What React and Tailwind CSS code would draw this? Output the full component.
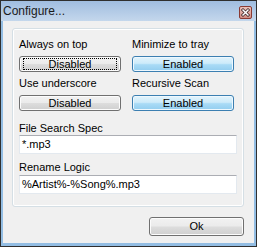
import { useState } from "react";

function GrayButton({ children, focused, className = "" }) {
  return (
    <button
      className={`relative flex items-center justify-center rounded-[3px] border border-[#707070] bg-[linear-gradient(#f2f2f2_0%,#ebebeb_48%,#dddddd_52%,#cfcfcf_100%)] text-[11px] leading-none text-black shadow-[inset_0_0_0_1px_#fcfcfc] ${className}`}
    >
      {focused && (
        <span className="pointer-events-none absolute bottom-[1px] left-[3px] right-[3px] top-[1px] border border-dotted border-black" />
      )}
      <span className="relative">{children}</span>
    </button>
  );
}

function BlueButton({ children, className = "" }) {
  return (
    <button
      className={`flex items-center justify-center rounded-[3px] border border-[#3c7fb1] bg-[linear-gradient(#e3f4fc_0%,#cdebfa_45%,#a9dbf6_55%,#92cdef_100%)] text-[11px] leading-none text-black shadow-[inset_0_0_0_1px_#eef8fe] ${className}`}
    >
      {children}
    </button>
  );
}

function Field({ value }) {
  return (
    <div className="flex h-[19px] w-[218px] items-center border border-[#e3e9ef] border-t-[#abadb3] bg-white pl-[2px] text-[11px] text-black">
      {value}
    </div>
  );
}

export default function App() {
  const [spec] = useState("*.mp3");
  const [logic] = useState("%Artist%-%Song%.mp3");

  return (
    <div
      className="flex h-[247px] w-[257px] flex-col border border-[#2f2f2f] bg-[#f0f0f0]"
      style={{ fontFamily: '"Liberation Sans", Arial, sans-serif' }}
    >
      <div className="flex h-[20px] items-center justify-between bg-[linear-gradient(#a0bde0,#c4d7ec)] pl-[2px] pr-[4px]">
        <span className="text-[12px] leading-none text-[#1a1a1a]">Configure...</span>
        <svg width="13" height="13" viewBox="0 0 13 13" className="mt-[2px]">
          <defs>
            <linearGradient id="cl" x1="0" y1="0" x2="0" y2="1">
              <stop offset="0" stopColor="#ecc3bc" />
              <stop offset="1" stopColor="#d28c82" />
            </linearGradient>
          </defs>
          <rect x="0.5" y="0.5" width="12" height="12" rx="1.5" fill="url(#cl)" stroke="#8a3a33" />
          <path d="M4 4 L9 9 M9 4 L4 9" stroke="#3a2020" strokeWidth="3" strokeLinecap="square" />
          <path d="M4 4 L9 9 M9 4 L4 9" stroke="#ffffff" strokeWidth="1.5" strokeLinecap="square" />
        </svg>
      </div>

      <div className="flex flex-1 flex-col border-x-2 border-b-[3px] border-[#93bde3] bg-[#f0f0f0]">
        <div className="ml-[9px] mt-[7px] w-[232px] rounded-[3px] border border-[#d5dfe5] pb-[12px] pl-[6px] pt-[9px] shadow-[inset_0_0_0_1px_#ffffff] text-[11px] leading-[13px] text-black">
          <div className="grid grid-cols-[102px_102px] gap-x-[11px]">
            <div className="flex flex-col">
              <span>Always on top</span>
              <GrayButton focused className="mt-[5px] h-[16px] w-[102px]">Disabled</GrayButton>
            </div>
            <div className="flex flex-col">
              <span>Minimize to tray</span>
              <BlueButton className="mt-[5px] h-[16px] w-[102px]">Enabled</BlueButton>
            </div>
            <div className="mt-[5px] flex flex-col">
              <span>Use underscore</span>
              <GrayButton className="mt-[5px] h-[16px] w-[102px]">Disabled</GrayButton>
            </div>
            <div className="mt-[5px] flex flex-col">
              <span>Recursive Scan</span>
              <BlueButton className="mt-[5px] h-[16px] w-[102px]">Enabled</BlueButton>
            </div>
          </div>

          <div className="mt-[11px] flex flex-col">
            <span>File Search Spec</span>
            <Field value={spec} />
            <span className="mt-[7px]">Rename Logic</span>
            <div className="mt-[1px]">
              <Field value={logic} />
            </div>
          </div>
        </div>

        <div className="mt-[10px] flex w-[241px] justify-end">
          <GrayButton className="h-[19px] w-[95px]">Ok</GrayButton>
        </div>
      </div>
    </div>
  );
}
